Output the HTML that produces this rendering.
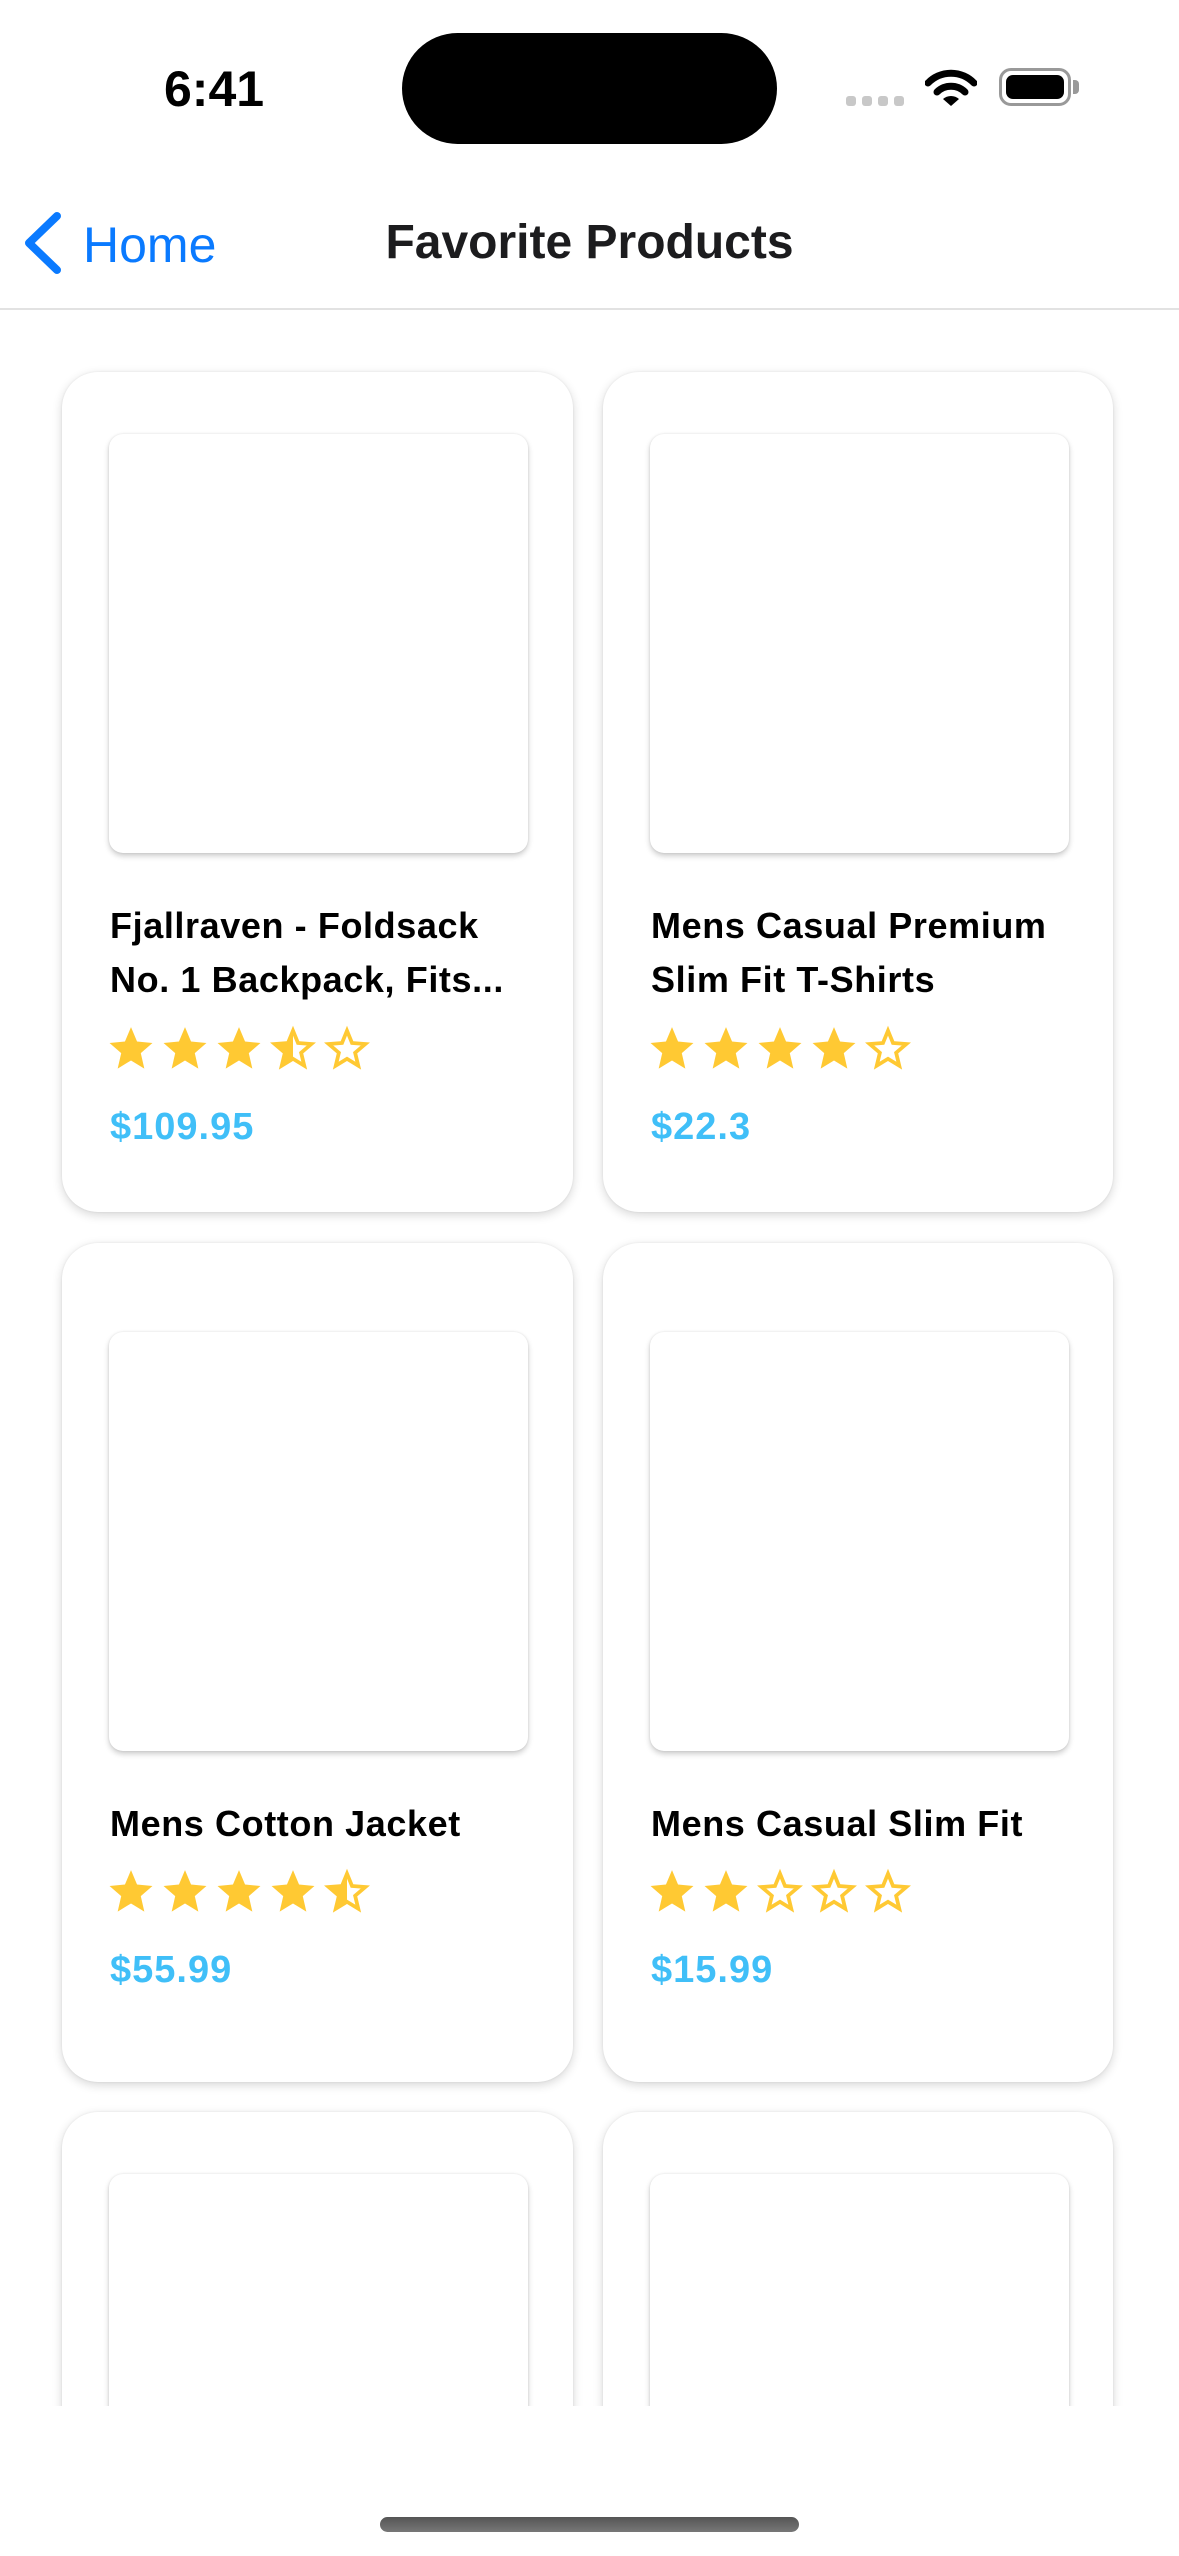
<!DOCTYPE html>
<html><head><meta charset="utf-8">
<style>
*{margin:0;padding:0;box-sizing:border-box}
html,body{width:1179px;height:2556px;background:#fff;overflow:hidden;font-family:"Liberation Sans",sans-serif}
#root{position:relative;width:1179px;height:2556px;overflow:hidden}
.abs{position:absolute}
.clip{position:absolute;left:0;top:0;width:1179px;height:2406px;overflow:hidden}
.card{position:absolute;background:#fff;border-radius:36px;box-shadow:0 3px 10px rgba(0,0,0,0.16),0 0 2px rgba(0,0,0,0.08)}
.img{position:absolute;left:47px;width:419px;height:419px;background:#fff;border-radius:14px;box-shadow:0 3px 6px rgba(0,0,0,0.2),0 0 2px rgba(0,0,0,0.1)}
.title{position:absolute;left:48px;font-weight:bold;font-size:36px;line-height:54px;color:#000;white-space:nowrap;letter-spacing:0.6px}
.stars{position:absolute;left:44px;height:50px;display:flex;gap:4px}
.stars svg{width:50px;height:50px}
.price{position:absolute;left:48px;font-weight:bold;font-size:38px;line-height:54px;color:#40bff8;letter-spacing:1px}
</style></head><body><div id="root">
<svg width="0" height="0" style="position:absolute">
<defs>
<symbol id="sf" viewBox="0 0 24 24"><path d="M12 1.5L14.9 8.4L22.3 9.1L16.7 14L18.4 21.4L12 17.5L5.6 21.4L7.3 14L1.7 9.1L9.1 8.4Z" fill="#ffc933"/></symbol>
<symbol id="so" viewBox="0 0 24 24"><path d="M12 3.2L14.4 9.1L20.8 9.6L15.9 13.8L17.4 20L12 16.7L6.6 20L8.1 13.8L3.2 9.6L9.6 9.1Z" fill="none" stroke="#ffc933" stroke-width="1.8" stroke-linejoin="miter"/></symbol>
<clipPath id="lh"><rect x="0" y="0" width="12" height="24"/></clipPath>
<symbol id="sh" viewBox="0 0 24 24"><use href="#so"/><path clip-path="url(#lh)" d="M12 1.5L14.9 8.4L22.3 9.1L16.7 14L18.4 21.4L12 17.5L5.6 21.4L7.3 14L1.7 9.1L9.1 8.4Z" fill="#ffc933"/></symbol>
</defs></svg>

<div class="clip">
<div class="card" style="left:62px;top:372px;width:511px;height:840px">
 <div class="img" style="top:62px"></div>
 <div class="title" style="top:527px">Fjallraven - Foldsack<br>No. 1 Backpack, Fits...</div>
 <div class="stars" style="top:652px"><svg><use href="#sf"/></svg><svg><use href="#sf"/></svg><svg><use href="#sf"/></svg><svg><use href="#sh"/></svg><svg><use href="#so"/></svg></div>
 <div class="price" style="top:728px">$109.95</div>
</div>
<div class="card" style="left:603px;top:372px;width:510px;height:840px">
 <div class="img" style="top:62px"></div>
 <div class="title" style="top:527px">Mens Casual Premium<br>Slim Fit T-Shirts</div>
 <div class="stars" style="top:652px"><svg><use href="#sf"/></svg><svg><use href="#sf"/></svg><svg><use href="#sf"/></svg><svg><use href="#sf"/></svg><svg><use href="#so"/></svg></div>
 <div class="price" style="top:728px">$22.3</div>
</div>

<div class="card" style="left:62px;top:1243px;width:511px;height:839px">
 <div class="img" style="top:89px"></div>
 <div class="title" style="top:554px">Mens Cotton Jacket</div>
 <div class="stars" style="top:624px"><svg><use href="#sf"/></svg><svg><use href="#sf"/></svg><svg><use href="#sf"/></svg><svg><use href="#sf"/></svg><svg><use href="#sh"/></svg></div>
 <div class="price" style="top:700px">$55.99</div>
</div>
<div class="card" style="left:603px;top:1243px;width:510px;height:839px">
 <div class="img" style="top:89px"></div>
 <div class="title" style="top:554px">Mens Casual Slim Fit</div>
 <div class="stars" style="top:624px"><svg><use href="#sf"/></svg><svg><use href="#sf"/></svg><svg><use href="#so"/></svg><svg><use href="#so"/></svg><svg><use href="#so"/></svg></div>
 <div class="price" style="top:700px">$15.99</div>
</div>

<div class="card" style="left:62px;top:2112px;width:511px;height:400px">
 <div class="img" style="top:62px;height:338px"></div>
</div>
<div class="card" style="left:603px;top:2112px;width:510px;height:400px">
 <div class="img" style="top:62px;height:338px"></div>
</div>
</div>

<div class="abs" style="left:164px;top:64px;font-size:50px;line-height:50px;font-weight:bold;color:#000">6:41</div>
<div class="abs" style="left:402px;top:33px;width:375px;height:111px;background:#000;border-radius:56px"></div>
<div class="abs" style="left:846px;top:96px;width:10px;height:10px;border-radius:3px;background:#c8c8c8"></div>
<div class="abs" style="left:862px;top:96px;width:10px;height:10px;border-radius:3px;background:#c8c8c8"></div>
<div class="abs" style="left:878px;top:96px;width:10px;height:10px;border-radius:3px;background:#c8c8c8"></div>
<div class="abs" style="left:894px;top:96px;width:10px;height:10px;border-radius:3px;background:#c8c8c8"></div>
<svg class="abs" style="left:925px;top:67px" width="52" height="40" viewBox="0 0 52 40">
<path d="M3 16 A32 32 0 0 1 49 16" fill="none" stroke="#000" stroke-width="7" stroke-linecap="round"/>
<path d="M12 25 A20 20 0 0 1 40 25" fill="none" stroke="#000" stroke-width="7" stroke-linecap="round"/>
<path d="M18 32 L26 39 L34 32 A12 12 0 0 0 18 32Z" fill="#000"/>
</svg>
<div class="abs" style="left:999px;top:68px;width:72px;height:38px;border:3px solid #999;border-radius:12px"></div>
<div class="abs" style="left:1006px;top:75px;width:58px;height:24px;background:#000;border-radius:7px"></div>
<div class="abs" style="left:1073px;top:80px;width:6px;height:14px;background:#999;border-radius:0 4px 4px 0"></div>

<svg class="abs" style="left:20px;top:208px" width="48" height="70" viewBox="0 0 48 70">
<path d="M37 8 L9 35 L37 62" fill="none" stroke="#0a7aff" stroke-width="8" stroke-linecap="round" stroke-linejoin="round"/>
</svg>
<div class="abs" style="left:83px;top:220px;font-size:50px;line-height:50px;color:#0a7aff">Home</div>
<div class="abs" style="left:0;width:1179px;text-align:center;top:219px;font-size:48px;line-height:48px;font-weight:bold;color:#1c1c1e">Favorite Products</div>
<div class="abs" style="left:0;top:308px;width:1179px;height:2px;background:#e2e2e2"></div>

<div class="abs" style="left:380px;top:2517px;width:419px;height:15px;border-radius:8px;background:linear-gradient(#555,#777)"></div>
</div></body></html>
